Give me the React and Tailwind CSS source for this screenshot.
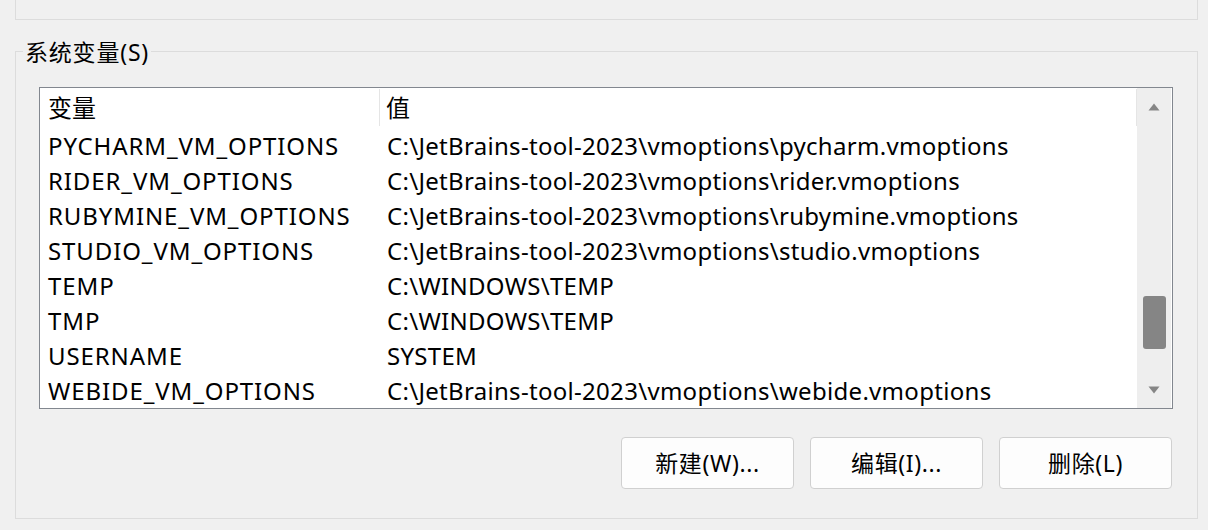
import React from "react";

const rows = [
  ["PYCHARM_VM_OPTIONS", "C:\\JetBrains-tool-2023\\vmoptions\\pycharm.vmoptions"],
  ["RIDER_VM_OPTIONS", "C:\\JetBrains-tool-2023\\vmoptions\\rider.vmoptions"],
  ["RUBYMINE_VM_OPTIONS", "C:\\JetBrains-tool-2023\\vmoptions\\rubymine.vmoptions"],
  ["STUDIO_VM_OPTIONS", "C:\\JetBrains-tool-2023\\vmoptions\\studio.vmoptions"],
  ["TEMP", "C:\\WINDOWS\\TEMP"],
  ["TMP", "C:\\WINDOWS\\TEMP"],
  ["USERNAME", "SYSTEM"],
  ["WEBIDE_VM_OPTIONS", "C:\\JetBrains-tool-2023\\vmoptions\\webide.vmoptions"],
];

const font = { fontFamily: '"Noto Sans", "Noto Sans CJK SC", sans-serif' };

function Btn({ children }) {
  return (
    <button className="w-[173px] h-[52px] rounded-[4px] border border-[#d0d0d0] bg-[#fdfdfd] text-[23px] text-black flex items-center justify-center tracking-[0.6px]">
      {children}
    </button>
  );
}

export default function App() {
  return (
    <div
      className="w-[1208px] h-[530px] bg-[#f0f0f0] text-black overflow-hidden flex flex-col text-[24px] leading-none"
      style={font}
    >
      <div className="ml-[15px] w-[1183px] h-[20px] border-x border-b border-[#dcdcdc]" />
      <div className="relative mt-[31px] ml-[15px] w-[1183px] h-[468px] border border-[#dcdcdc] flex flex-col">
        <div className="absolute left-[7px] top-[-15px] px-[2px] bg-[#f0f0f0] h-[30px] flex items-center text-[23px] tracking-[0.8px]">
          系统变量(S)
        </div>
        <div className="mt-[35px] ml-[23px] w-[1134px] h-[322px] border border-[#82878f] bg-white flex">
          <div className="flex-1 flex flex-col">
            <div className="h-[39px] flex items-stretch">
              <div className="w-[340px] flex items-center pl-[8px] pt-[1px] border-r border-[#e5e5e5] my-[1px]">变量</div>
              <div className="flex-1 flex items-center pl-[6px] pt-[1px] border-r border-[#e5e5e5] my-[1px]">值</div>
            </div>
            {rows.map(([k, v]) => (
              <div key={k} className="h-[35px] flex items-center pt-[2px]">
                <div className="w-[341px] pl-[8px] whitespace-nowrap tracking-[0.9px]">{k}</div>
                <div className="flex-1 pl-[6px] whitespace-nowrap tracking-[0.3px]">{v}</div>
              </div>
            ))}
          </div>
          <div className="w-[34px] mr-[1px] bg-[#eeeeee] flex flex-col items-center">
            <svg width="12" height="8" viewBox="0 0 12 8" className="mt-[15px]">
              <path d="M6 0.5 L11.5 7.5 L0.5 7.5 Z" fill="#858585" />
            </svg>
            <div className="mt-[185px] w-[23px] h-[53px] rounded-[3px] bg-[#858585]" />
            <svg width="12" height="8" viewBox="0 0 12 8" className="mt-[37px]">
              <path d="M0.5 0.5 L11.5 0.5 L6 7.5 Z" fill="#858585" />
            </svg>
          </div>
        </div>
        <div className="mt-[28px] flex justify-end gap-[16px] pr-[25px]">
          <Btn>新建(W)...</Btn>
          <Btn>编辑(I)...</Btn>
          <Btn>删除(L)</Btn>
        </div>
      </div>
    </div>
  );
}
